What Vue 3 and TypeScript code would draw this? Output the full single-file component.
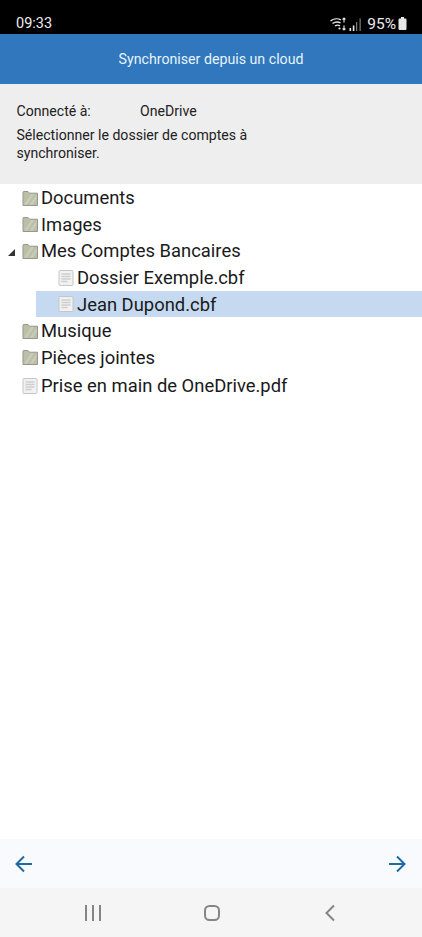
<script setup lang="ts">
interface Row { name: string; kind: 'folder' | 'file'; level: number; open?: boolean; selected?: boolean; extra?: boolean }
const rows: Row[] = [
  { name: 'Documents', kind: 'folder', level: 0 },
  { name: 'Images', kind: 'folder', level: 0 },
  { name: 'Mes Comptes Bancaires', kind: 'folder', level: 0, open: true },
  { name: 'Dossier Exemple.cbf', kind: 'file', level: 1 },
  { name: 'Jean Dupond.cbf', kind: 'file', level: 1, selected: true },
  { name: 'Musique', kind: 'folder', level: 0 },
  { name: 'Pièces jointes', kind: 'folder', level: 0 },
  { name: 'Prise en main de OneDrive.pdf', kind: 'file', level: 0, extra: true },
]
</script>

<template>
  <div class="screen">
    <div class="status">
      <span class="time">09:33</span>
      <div class="status-right">
        <svg class="wifi" width="17" height="14" viewBox="0 0 17 14" fill="none" stroke="#e8e8e8" stroke-width="1.4">
          <path d="M0.5 4C3.5 1.6 8 1.2 11 3" />
          <path d="M2.5 6.5C5 4.8 8 4.6 10.5 5.8" />
          <path d="M5 9C6.5 8 8.5 8 10 8.8" />
          <circle cx="9.5" cy="11.5" r="1.1" fill="#e8e8e8" stroke="none" />
          <path d="M14 1v4.5M12.6 2.5L14 1l1.4 1.5M14 13V8.5M12.6 11.5L14 13l1.4-1.5" stroke-width="1.1" />
        </svg>
        <svg class="signal" width="13" height="13" viewBox="0 0 13 13" fill="#e8e8e8">
          <rect x="0.5" y="10" width="1.6" height="3" />
          <rect x="3.8" y="7.5" width="1.6" height="5.5" />
          <rect x="7.2" y="4" width="1" height="9" fill="#999" />
          <rect x="10.6" y="0.5" width="1" height="12.5" fill="#999" />
        </svg>
        <span class="pct">95%</span>
        <svg class="battery" width="9" height="14" viewBox="0 0 9 14" fill="#e8e8e8">
          <rect x="3" y="0" width="3" height="2" />
          <rect x="0.5" y="1.5" width="8" height="11.5" rx="1.2" />
        </svg>
      </div>
    </div>

    <header class="title-bar">Synchroniser depuis un cloud</header>

    <section class="info">
      <div class="connected">
        <span class="label">Connecté à:</span>
        <span>OneDrive</span>
      </div>
      <p class="hint">Sélectionner le dossier de comptes à<br />synchroniser.</p>
    </section>

    <main class="tree">
      <div
        v-for="row in rows"
        :key="row.name"
        class="row"
        :class="{ child: row.level === 1, selected: row.selected, extra: row.extra }"
      >
        <span v-if="row.open" class="caret"></span>
        <svg v-if="row.kind === 'folder'" class="icon" width="16" height="16" viewBox="0 0 16 16">
          <path d="M1 15.5V2.2c0-.5.3-.7.7-.7h4.3l1.5 1.7h8V15.5z" fill="#bcbfa8" stroke="#97978c" />
          <path d="M2 14.7L9 4.2h3L5 14.7zM7.5 14.7l7-10v3.5L11 14.7z" fill="#c9ccb8" />
        </svg>
        <svg v-else class="icon" width="16" height="16" viewBox="0 0 16 16">
          <rect x="1" y="0.5" width="14" height="15" rx="1" fill="#f1f1f1" stroke="#c6c6c6" />
          <path d="M3.5 4h9M3.5 6.5h9M3.5 9h9M3.5 11.5h6" stroke="#cfcfcf" stroke-width="1.3" />
        </svg>
        <span class="name">{{ row.name }}</span>
      </div>
    </main>

    <footer class="actions">
      <svg width="20" height="20" viewBox="0 0 20 20" fill="none" stroke="#1f6aa5" stroke-width="2">
        <path d="M18 10H3M10 2.5L2.5 10l7.5 7.5" />
      </svg>
      <svg width="20" height="20" viewBox="0 0 20 20" fill="none" stroke="#1f6aa5" stroke-width="2">
        <path d="M2 10h15M10 2.5l7.5 7.5-7.5 7.5" />
      </svg>
    </footer>

    <nav class="navbar">
      <svg width="18" height="16" viewBox="0 0 18 16" fill="#858585">
        <rect x="1" y="0" width="2" height="16" />
        <rect x="8" y="0" width="2" height="16" />
        <rect x="15" y="0" width="2" height="16" />
      </svg>
      <svg width="18" height="18" viewBox="0 0 18 18" fill="none" stroke="#858585" stroke-width="2">
        <rect x="2" y="2" width="14" height="14" rx="4.5" />
      </svg>
      <svg width="18" height="18" viewBox="0 0 18 18" fill="none" stroke="#858585" stroke-width="2">
        <path d="M13 1.5L5.5 9l7.5 7.5" />
      </svg>
    </nav>
  </div>
</template>

<style>
html, body { margin: 0; background: #fff; }
</style>

<style scoped>
.screen {
  width: 422px;
  height: 937px;
  display: flex;
  flex-direction: column;
  overflow: hidden;
  background: #fff;
  font-family: Roboto, "Liberation Sans", sans-serif;
}
.status {
  height: 34px;
  flex: none;
  background: #000;
  color: #ececec;
  display: flex;
  align-items: flex-end;
  justify-content: space-between;
  padding: 0 15px 1px 16px;
  box-sizing: border-box;
  font-size: 14.5px;
}
.time { line-height: 18px; }
.status-right { display: flex; align-items: center; height: 18px; }
.wifi { margin-right: 2px; }
.signal { margin-right: 5px; }
.pct { font-size: 15.5px; }
.battery { margin-left: 2px; }
.title-bar {
  height: 50px;
  flex: none;
  background: #3077bd;
  color: #e6f4fb;
  font-size: 14.2px;
  display: flex;
  align-items: center;
  justify-content: center;
}
.info {
  height: 100px;
  flex: none;
  box-sizing: border-box;
  background: #eeeeee;
  color: #222;
  font-size: 14.1px;
  padding: 19px 16.5px 0;
}
.connected { display: flex; line-height: 16px; }
.label { width: 123.5px; }
.hint { margin: 8px 0 0; line-height: 17.5px; }
.tree { flex: 1; padding-top: 0.5px; }
.row {
  position: relative;
  height: 26.6px;
  display: flex;
  align-items: center;
  padding-left: 22px;
  color: #1a1a1a;
  font-size: 18.4px;
}
.row.child { padding-left: 58px; }
.row.selected { margin-left: 36px; padding-left: 22px; background: #c5d9f0; }
.row.extra { margin-top: 2px; }
.icon { flex: none; margin-right: 3px; }
.caret {
  position: absolute;
  left: 8px;
  top: 11px;
  width: 0;
  height: 0;
  border-style: solid;
  border-width: 0 0 7px 7px;
  border-color: transparent transparent #333 transparent;
}
.actions {
  height: 49px;
  flex: none;
  background: #f8fafd;
  display: flex;
  align-items: center;
  justify-content: space-between;
  padding: 0 15px 0 14px;
}
.navbar {
  height: 49px;
  flex: none;
  background: #f5f5f5;
  display: flex;
  align-items: center;
  padding: 0 83px 0 84px;
  justify-content: space-between;
}
</style>
